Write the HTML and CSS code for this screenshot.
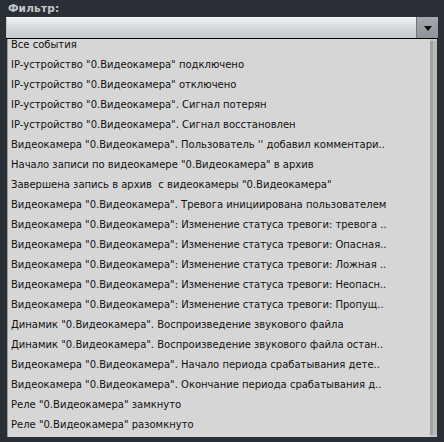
FILE: index.html
```html
<!DOCTYPE html>
<html>
<head>
<meta charset="utf-8">
<link rel="stylesheet" href="styles.css">
</head>
<body>
<div class="panel">
  <div class="label">Фильтр:</div>
  <div class="combo">
    <div class="field"></div>
    <div class="btn"><span class="tri"></span></div>
  </div>
  <div class="list">
    <ul class="items">
      <li>Все события</li>
      <li>IP-устройство "0.Видеокамера" подключено</li>
      <li>IP-устройство "0.Видеокамера" отключено</li>
      <li>IP-устройство "0.Видеокамера". Сигнал потерян</li>
      <li>IP-устройство "0.Видеокамера". Сигнал восстановлен</li>
      <li>Видеокамера "0.Видеокамера". Пользователь '' добавил комментари..</li>
      <li>Начало записи по видеокамере "0.Видеокамера" в архив</li>
      <li>Завершена запись в архив&nbsp; с видеокамеры "0.Видеокамера"</li>
      <li>Видеокамера "0.Видеокамера". Тревога инициирована пользователем</li>
      <li>Видеокамера "0.Видеокамера": Изменение статуса тревоги: тревога ..</li>
      <li>Видеокамера "0.Видеокамера": Изменение статуса тревоги: Опасная..</li>
      <li>Видеокамера "0.Видеокамера": Изменение статуса тревоги: Ложная ..</li>
      <li>Видеокамера "0.Видеокамера": Изменение статуса тревоги: Неопасн..</li>
      <li>Видеокамера "0.Видеокамера": Изменение статуса тревоги: Пропущ..</li>
      <li>Динамик "0.Видеокамера". Воспроизведение звукового файла</li>
      <li>Динамик "0.Видеокамера". Воспроизведение звукового файла остан..</li>
      <li>Видеокамера "0.Видеокамера". Начало периода срабатывания дете..</li>
      <li>Видеокамера "0.Видеокамера". Окончание периода срабатывания д..</li>
      <li>Реле "0.Видеокамера" замкнуто</li>
      <li>Реле "0.Видеокамера" разомкнуто</li>
    </ul>
    <div class="scroll"><div class="thumb"></div></div>
  </div>
</div>
</body>
</html>
```
FILE: styles.css
```css
html, body {
  margin: 0;
  padding: 0;
  background: #2a2e35;
  width: 444px;
  height: 442px;
  overflow: hidden;
}
.panel {
  padding: 2px 6px 0 6px;
  font-family: "DejaVu Sans", Verdana, sans-serif;
}
.label {
  color: #c4c6c8;
  font-weight: bold;
  font-size: 10.5px;
  line-height: 13px;
  padding-left: 2px;
  height: 15px;
  letter-spacing: 0.2px;
}
.combo {
  display: flex;
  height: 21px;
  border-bottom: 1px solid #000;
}
.field {
  flex: 1;
  background: linear-gradient(#eef0f2, #d2d5d8 60%, #c6c9cc);
  border-top: 1px solid #f4f6f8;
  border-left: 1px solid #c0c3c6;
}
.btn {
  width: 21px;
  background: linear-gradient(#a4a9ae, #8e9399);
  border-left: 1px solid #70757a;
  display: flex;
  align-items: center;
  justify-content: center;
}
.tri {
  width: 0;
  height: 0;
  border-left: 4px solid transparent;
  border-right: 4px solid transparent;
  border-top: 5px solid #111;
  margin-top: 1px;
}
.list {
  display: flex;
  margin-left: 1px;
  margin-right: 1px;
  background: #d6d6d6;
  height: 398px;
  border-left: 1px solid #9a9a9a;
  overflow: hidden;
}
.items {
  list-style: none;
  margin: -4px 0 0 0;
  padding: 0 0 0 3px;
  flex: 1;
  overflow: hidden;
}
.items li {
  height: 20px;
  line-height: 20px;
  font-size: 10px;
  color: #111;
  white-space: nowrap;
  overflow: hidden;
}
.scroll {
  width: 7px;
  background: #c4c4c4;
  padding: 1px 0 2px 0;
  display: flex;
}
.thumb {
  flex: 1;
  background: linear-gradient(90deg, #a2a2a2 0 3px, #bababa 3px);
  margin-top: 1px;
}
```
